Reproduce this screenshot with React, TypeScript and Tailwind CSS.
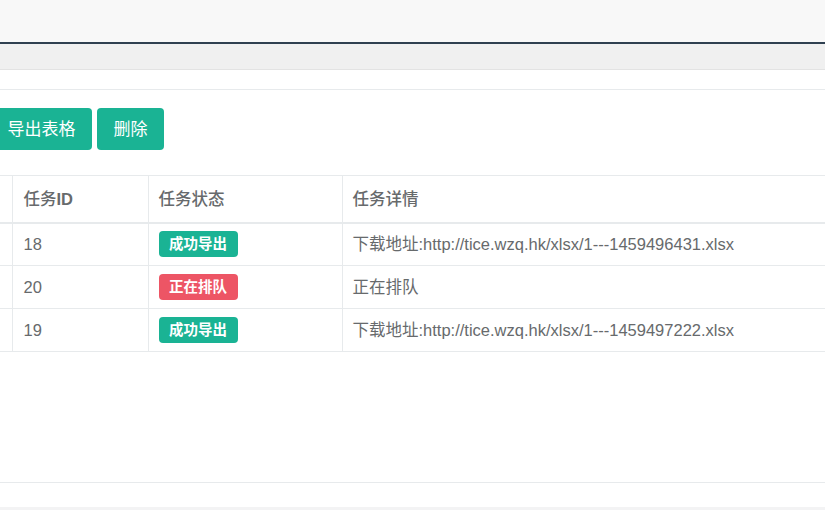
import React from "react";

const rows = [
  { id: "18", ok: true, detail: "下载地址:http://tice.wzq.hk/xlsx/1---1459496431.xlsx" },
  { id: "20", ok: false, detail: "正在排队" },
  { id: "19", ok: true, detail: "下载地址:http://tice.wzq.hk/xlsx/1---1459497222.xlsx" },
];

export default function App() {
  return (
    <div
      className="w-[825px] h-[510px] overflow-hidden bg-white text-[#676a6c] flex flex-col"
      style={{ fontFamily: '"Liberation Sans", "Noto Sans CJK SC", sans-serif' }}
    >
      <div className="h-[42px] shrink-0 bg-[#f8f8f8]" />
      <div className="h-[2px] shrink-0 bg-[#2f4050]" />
      <div className="h-[26px] shrink-0 bg-[#f0f0f0] border-b border-[#e3e3e3]" />
      <div className="h-[20px] shrink-0 bg-white border-b border-[#e7eaec]" />
      <div className="pt-[18px] flex flex-col">
        <div className="flex gap-[5px] ml-[-9px]">
          <button className="h-[42px] px-[16.5px] rounded-[4px] bg-[#1ab394] text-white text-[17px] leading-none">
            导出表格
          </button>
          <button className="h-[42px] px-[16.5px] rounded-[4px] bg-[#1ab394] text-white text-[17px] leading-none">
            删除
          </button>
        </div>
        <table className="mt-[25px] w-[1000px] border-collapse text-[16.5px] leading-none">
          <thead>
            <tr className="h-[47px] border-t border-[#e7eaec] border-b-2 border-b-[#e7eaec]">
              <th className="w-[12px] p-0 border-r border-[#e7eaec]" />
              <th className="w-[136px] px-[11px] text-left font-bold border-r border-[#e7eaec]">
                <span className="font-medium">任务</span>ID
              </th>
              <th className="w-[194px] px-[10px] text-left font-medium border-r border-[#e7eaec]">任务状态</th>
              <th className="px-[10px] text-left font-medium">任务详情</th>
            </tr>
          </thead>
          <tbody>
            {rows.map((r) => (
              <tr key={r.id} className="h-[43px] border-b border-[#e7eaec]">
                <td className="p-0 border-r border-[#e7eaec]" />
                <td className="px-[11px] border-r border-[#e7eaec]">{r.id}</td>
                <td className="px-[10px] border-r border-[#e7eaec]">
                  <span
                    className={
                      r.ok
                        ? "inline-flex items-center h-[26px] px-[10.5px] rounded-[4px] bg-[#1ab394] text-white text-[14.5px] font-bold"
                        : "inline-flex items-center h-[26px] px-[10.5px] rounded-[4px] bg-[#ed5565] text-white text-[14.5px] font-bold"
                    }
                  >
                    {r.ok ? "成功导出" : "正在排队"}
                  </span>
                </td>
                <td className="px-[10px]">{r.detail}</td>
              </tr>
            ))}
          </tbody>
        </table>
      </div>
      <div className="flex-1" />
      <div className="h-[25px] shrink-0 border-t border-[#e7eaec] bg-white" />
      <div className="h-[3px] shrink-0 bg-[#f3f3f4]" />
    </div>
  );
}
